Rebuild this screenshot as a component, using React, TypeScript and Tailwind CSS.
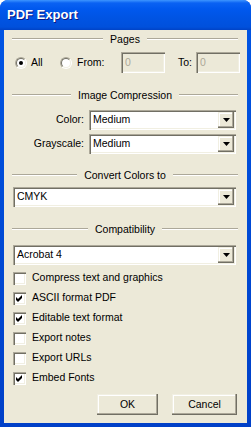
import React from 'react';

const sunken =
  'shadow-[inset_1px_1px_0_#aca899,inset_2px_2px_0_#716f64,inset_-1px_-1px_0_#ffffff,inset_-2px_-2px_0_#f1efe2]';
const raised =
  'shadow-[inset_-1px_-1px_0_#716f64,inset_-2px_-2px_0_#aca899,inset_1px_1px_0_#f1efe2,inset_2px_2px_0_#ffffff]';

function Header({ label, className = '' }: { label: string; className?: string }) {
  return (
    <div className={`flex items-center gap-[7px] h-[12px] -ml-px -mr-[2px] ${className}`}>
      <div className="flex-1 h-[2px] border-t border-t-[#aca899] border-b border-b-white" />
      <span className="leading-[12px]">{label}</span>
      <div className="flex-1 h-[2px] border-t border-t-[#aca899] border-b border-b-white" />
    </div>
  );
}

function Radio({ checked, className = '' }: { checked?: boolean; className?: string }) {
  return (
    <div className={`relative block w-[12px] h-[12px] shrink-0 rounded-full border border-t-[#aca899] border-l-[#aca899] border-b-white border-r-white ${className}`}>
      <div className="absolute inset-0 flex items-center justify-center rounded-full border border-t-[#716f64] border-l-[#716f64] border-b-[#f1efe2] border-r-[#f1efe2] bg-white">
        {checked && <div className="w-[4px] h-[4px] rounded-full bg-black" />}
      </div>
    </div>
  );
}

function Checkbox({ label, checked }: { label: string; checked?: boolean }) {
  return (
    <div className="flex items-center h-[20px] gap-[6px]">
      <div className={`w-[13px] h-[13px] shrink-0 flex items-center justify-center bg-white ${sunken}`}>
        {checked && (
          <svg width="7" height="7" viewBox="0 0 7 7">
            <path d="M0 2 L2 4 L6 0 L6 3 L2 7 L0 5 Z" fill="#000" />
          </svg>
        )}
      </div>
      <span>{label}</span>
    </div>
  );
}

function Select({ value, className = '' }: { value: string; className?: string }) {
  return (
    <div className={`flex items-center h-[20px] min-w-0 bg-white pl-[4px] pr-[2px] ${sunken} ${className}`}>
      <span className="flex-1">{value}</span>
      <div className={`w-[16px] h-[16px] flex items-center justify-center bg-[#ece9d8] ${raised}`}>
        <svg width="7" height="4" viewBox="0 0 7 4">
          <path d="M0 0 H7 L3.5 4 Z" fill="#000" />
        </svg>
      </div>
    </div>
  );
}

function Button({ label, className = '' }: { label: string; className?: string }) {
  return (
    <div className={`h-[21px] flex items-center justify-center bg-[#ece9d8] ${raised} ${className}`}>
      {label}
    </div>
  );
}

function DisabledInput({ value }: { value: string }) {
  return (
    <div className={`w-[44px] h-[21px] shrink-0 pl-[4px] flex items-center text-[#aca899] ${sunken}`}>
      {value}
    </div>
  );
}

export default function App() {
  return (
    <div className="w-[251px] h-[427px] flex flex-col rounded-t-[8px] overflow-hidden bg-[#0048e0] font-['Liberation_Sans',Arial,sans-serif] text-[10.5px] text-black">
      <div className="h-[30px] shrink-0 flex items-center pl-[7px] bg-[linear-gradient(to_bottom,#3d95ff_0%,#0a62f3_10%,#0058ee_30%,#0054e3_60%,#0050dc_90%,#0043c6_100%)]">
        <span className="text-white font-bold text-[13px] [text-shadow:1px_1px_0_#0a1883]">PDF Export</span>
      </div>
      <div className="flex-1 flex px-[4px] pb-[4px] bg-[linear-gradient(to_bottom,#0054e3,#0040c8)]">
        <div className="flex-1 min-w-0 flex flex-col bg-[#ece9d8] pl-[9px] pr-[11px]">
          <Header label="Pages" className="mt-[3px]" />
          <div className="flex items-center h-[21px] mt-[7px]">
            <Radio checked className="ml-[2px]" />
            <span className="ml-[4px] w-[29px] shrink-0">All</span>
            <Radio />
            <span className="ml-[5px] w-[44px] shrink-0">From:</span>
            <DisabledInput value="0" />
            <span className="ml-[13px] w-[18px] shrink-0">To:</span>
            <DisabledInput value="0" />
          </div>

          <Header label="Image Compression" className="mt-[16px]" />
          <div className="flex items-center mt-[9px]">
            <span className="w-[76px] shrink-0 text-right pr-[5px]">Color:</span>
            <Select value="Medium" className="flex-1" />
          </div>
          <div className="flex items-center mt-[4px]">
            <span className="w-[76px] shrink-0 text-right pr-[5px]">Grayscale:</span>
            <Select value="Medium" className="flex-1" />
          </div>

          <Header label="Convert Colors to" className="mt-[15px]" />
          <Select value="CMYK" className="mt-[6px]" />

          <Header label="Compatibility" className="mt-[16px]" />
          <Select value="Acrobat 4" className="mt-[10px]" />

          <div className="flex flex-col mt-[3px]">
            <Checkbox label="Compress text and graphics" />
            <Checkbox label="ASCII format PDF" checked />
            <Checkbox label="Editable text format" checked />
            <Checkbox label="Export notes" />
            <Checkbox label="Export URLs" />
            <Checkbox label="Embed Fonts" checked />
          </div>

          <div className="flex justify-end gap-[14px] mt-[6px] -mr-px">
            <Button label="OK" className="w-[61px]" />
            <Button label="Cancel" className="w-[65px]" />
          </div>
        </div>
      </div>
    </div>
  );
}
